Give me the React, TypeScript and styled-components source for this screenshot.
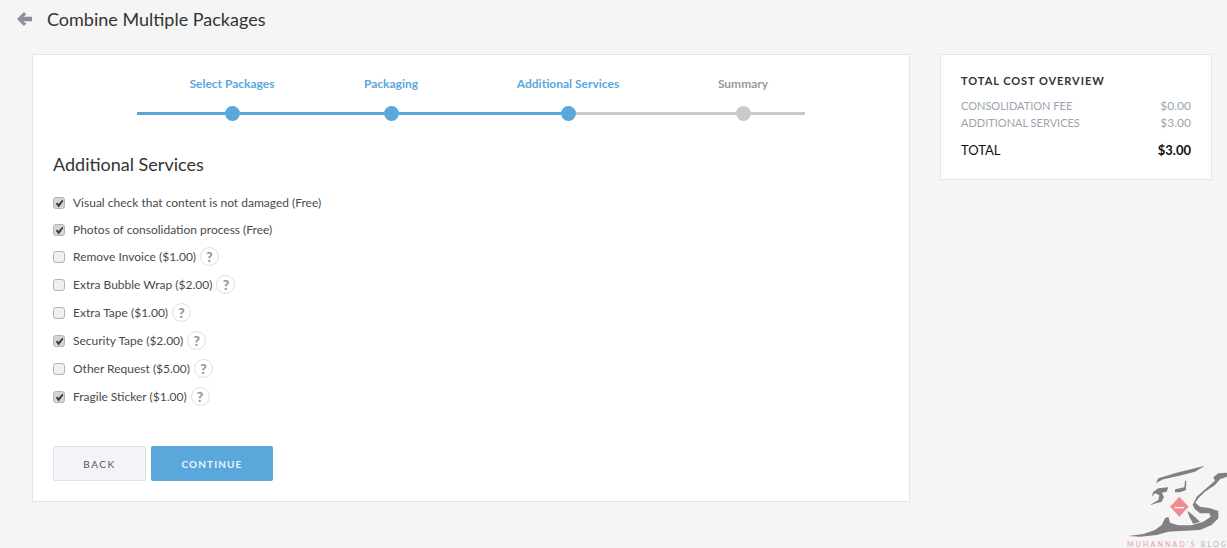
import * as React from 'react';
import styled, {createGlobalStyle} from 'styled-components';

const BLUE = '#5aa7dc';
const GREY = '#cacaca';

type Step = {label: string; width: number; left: boolean; right: boolean; active: boolean};

const steps: Step[] = [
  {label: 'Select Packages', width: 190, left: true, right: true, active: true},
  {label: 'Packaging', width: 128, left: true, right: true, active: true},
  {label: 'Additional Services', width: 226, left: true, right: false, active: true},
  {label: 'Summary', width: 124, left: false, right: false, active: false},
];

type Service = {label: string; checked: boolean; help: boolean};

const services: Service[] = [
  {label: 'Visual check that content is not damaged (Free)', checked: true, help: false},
  {label: 'Photos of consolidation process (Free)', checked: true, help: false},
  {label: 'Remove Invoice ($1.00)', checked: false, help: true},
  {label: 'Extra Bubble Wrap ($2.00)', checked: false, help: true},
  {label: 'Extra Tape ($1.00)', checked: false, help: true},
  {label: 'Security Tape ($2.00)', checked: true, help: true},
  {label: 'Other Request ($5.00)', checked: false, help: true},
  {label: 'Fragile Sticker ($1.00)', checked: true, help: true},
];

const App = () => {
  return (
    <Page>
      <GlobalStyle />
      <Header>
        <BackArrow viewBox="0 0 15 14" aria-hidden="true">
          <path d="M7 0 L9.4 2.4 L6.2 4.7 H15 V9.3 H6.2 L9.4 11.6 L7 14 L0 7 Z" />
        </BackArrow>
        <Title>Combine Multiple Packages</Title>
      </Header>
      <Columns>
        <MainCard>
          <Stepper>
            {steps.map((step) => (
              <StepColumn key={step.label} $width={step.width}>
                <StepLabel $active={step.active}>{step.label}</StepLabel>
                <Track>
                  <TrackLine $active={step.left} />
                  <Dot $active={step.active} />
                  <TrackLine $active={step.right} />
                </Track>
              </StepColumn>
            ))}
          </Stepper>
          <Heading>Additional Services</Heading>
          <ServiceList>
            {services.map((service) => (
              <ServiceRow key={service.label} $help={service.help}>
                <CheckBox $checked={service.checked}>
                  {service.checked && (
                    <svg width="9" height="9" viewBox="0 0 9 9" aria-hidden="true">
                      <path d="M0.8 4.8 L2.4 3.4 L3.6 5 L7.2 0.8 L8.4 2 L3.7 8.4 Z" fill="#3c3c3c" />
                    </svg>
                  )}
                </CheckBox>
                <ServiceLabel>{service.label}</ServiceLabel>
                {service.help && <HelpBadge>?</HelpBadge>}
              </ServiceRow>
            ))}
          </ServiceList>
          <Actions>
            <BackButton type="button">BACK</BackButton>
            <ContinueButton type="button">CONTINUE</ContinueButton>
          </Actions>
        </MainCard>
        <SideCard>
          <SideTitle>TOTAL COST OVERVIEW</SideTitle>
          <CostRow>
            <CostName>CONSOLIDATION FEE</CostName>
            <span>$0.00</span>
          </CostRow>
          <CostRow>
            <CostName>ADDITIONAL SERVICES</CostName>
            <span>$3.00</span>
          </CostRow>
          <TotalRow>
            <span>TOTAL</span>
            <strong>$3.00</strong>
          </TotalRow>
        </SideCard>
      </Columns>
      <Watermark>
        <svg width="127" height="88" viewBox="0 0 381 264" aria-hidden="true">
          <g fill="#808080">
            <path d="M168 99 L175 85 L230 68 L315 47 L285 65 L235 78 L190 88 Z" />
            <path d="M340 82 L355 70 L381 68 L381 80 L360 88 L345 105 L315 125 L295 145 L286 158 L300 170 L330 175 L355 183 L355 205 L335 225 L300 240 L240 243 L205 245 L170 255 L120 260 L85 258 L130 252 L165 240 L185 225 L195 205 L205 200 L210 218 L235 226 L275 226 L310 215 L332 200 L328 190 L300 190 L285 178 L278 165 L290 140 L330 105 L345 92 Z" />
            <path d="M160 125 L175 115 L205 112 L200 125 L185 128 L192 140 L185 155 L150 165 L175 150 L178 135 L165 130 L155 140 Z" />
            <path d="M225 118 L240 115 L253 112 L255 92 L259 92 L258 120 L240 127 L225 127 Z" />
            <path d="M262 182 L278 195 L300 215 L280 222 L268 200 Z" />
          </g>
          <path d="M238 140 L266 170 L238 200 L210 170 Z" fill="#f08b92" />
          <path d="M224 171 H252 V175 H224 Z" fill="#f7f7f7" />
        </svg>
        <WatermarkText>
          <span>MUHANNAD'S</span> BLOG
        </WatermarkText>
      </Watermark>
    </Page>
  );
};

export default App;

const GlobalStyle = createGlobalStyle`
  html, body {
    margin: 0;
    padding: 0;
    height: 100%;
    background: #f5f5f5;
  }

  body {
    font-family: Lato, "Open Sans", sans-serif;
    color: #3c3c3c;
  }
`;

const Page = styled.div`
  position: relative;
  width: 1227px;
  height: 548px;
  overflow: hidden;
  background: #f5f5f5;
`;

const Header = styled.header`
  display: flex;
  align-items: center;
  height: 38px;
  padding-left: 17px;
`;

const BackArrow = styled.svg`
  width: 15px;
  height: 14px;
  margin-right: 15px;
  fill: #8d8d9b;
`;

const Title = styled.h1`
  margin: 0;
  font-size: 18px;
  font-weight: 400;
  color: #333;
`;

const Columns = styled.div`
  display: flex;
  align-items: flex-start;
  gap: 30px;
  margin-top: 16px;
  padding-left: 32px;
`;

const MainCard = styled.section`
  box-sizing: border-box;
  width: 878px;
  height: 448px;
  padding: 19px 20px 0;
  background: #fff;
  border: 1px solid #e3e3e8;
`;

const Stepper = styled.div`
  display: flex;
  margin-left: 84px;
  width: 668px;
`;

const StepColumn = styled.div<{$width: number}>`
  display: flex;
  flex-direction: column;
  align-items: center;
  width: ${(p) => p.$width}px;
`;

const StepLabel = styled.div<{$active: boolean}>`
  height: 20px;
  line-height: 20px;
  font-size: 12px;
  font-weight: 700;
  white-space: nowrap;
  color: ${(p) => (p.$active ? BLUE : '#9a9a9a')};
`;

const Track = styled.div`
  display: flex;
  align-items: center;
  width: 100%;
  height: 16px;
  margin-top: 11px;
`;

const TrackLine = styled.div<{$active: boolean}>`
  flex: 1;
  height: 3px;
  background: ${(p) => (p.$active ? BLUE : GREY)};
`;

const Dot = styled.div<{$active: boolean}>`
  flex: none;
  width: 15px;
  height: 15px;
  border-radius: 50%;
  background: ${(p) => (p.$active ? BLUE : GREY)};
`;

const Heading = styled.h2`
  margin: 32px 0 0;
  height: 22px;
  line-height: 22px;
  font-size: 18px;
  font-weight: 400;
  color: #333;
`;

const ServiceList = styled.div`
  display: flex;
  flex-direction: column;
  margin-top: 18px;
`;

const ServiceRow = styled.label<{$help: boolean}>`
  display: flex;
  align-items: center;
  height: 19px;
  margin-bottom: ${(p) => (p.$help ? 9 : 8)}px;
`;

const CheckBox = styled.span<{$checked: boolean}>`
  box-sizing: border-box;
  display: flex;
  align-items: center;
  justify-content: center;
  width: 12px;
  height: 12px;
  margin: 1px 8px 0 0;
  border: 1px solid #b4b4b4;
  border-radius: 3px;
  background: ${(p) => (p.$checked ? '#d6d6d6' : '#f0f0f0')};
`;

const ServiceLabel = styled.span`
  font-size: 12px;
  color: #4a4a4a;
`;

const HelpBadge = styled.span`
  box-sizing: border-box;
  display: flex;
  align-items: center;
  justify-content: center;
  width: 19px;
  height: 19px;
  margin-left: 4px;
  border: 1px solid #dcdfe3;
  border-radius: 50%;
  font-size: 14px;
  font-weight: 900;
  color: #8f98a3;
`;

const Actions = styled.div`
  display: flex;
  gap: 5px;
  margin-top: 31px;
`;

const BackButton = styled.button`
  box-sizing: border-box;
  width: 93px;
  height: 35px;
  padding: 0;
  border: 1px solid #dfe1e6;
  border-radius: 2px;
  background: #f3f4f8;
  font-family: inherit;
  font-size: 10px;
  letter-spacing: 1.6px;
  color: #555;
`;

const ContinueButton = styled.button`
  box-sizing: border-box;
  width: 122px;
  height: 35px;
  padding: 0;
  border: 0;
  border-radius: 2px;
  background: ${BLUE};
  font-family: inherit;
  font-size: 10px;
  font-weight: 700;
  letter-spacing: 1.1px;
  color: #e8f3fb;
`;

const SideCard = styled.aside`
  box-sizing: border-box;
  width: 272px;
  height: 126px;
  padding: 19px 20px 0;
  background: #fff;
  border: 1px solid #e3e3e8;
`;

const SideTitle = styled.div`
  height: 14px;
  line-height: 14px;
  margin-bottom: 9px;
  font-size: 11px;
  font-weight: 700;
  letter-spacing: 0.95px;
  color: #333;
`;

const CostRow = styled.div`
  display: flex;
  justify-content: space-between;
  height: 17px;
  line-height: 17px;
  font-size: 12px;
  color: #9aa5ae;
`;

const CostName = styled.span`
  font-size: 11px;
`;

const TotalRow = styled.div`
  display: flex;
  justify-content: space-between;
  margin-top: 11px;
  height: 17px;
  line-height: 17px;
  font-size: 13px;
  color: #111;

  strong {
    font-weight: 700;
  }
`;

const Watermark = styled.div`
  position: absolute;
  left: 1100px;
  top: 450px;
  width: 127px;
  height: 98px;
  overflow: hidden;
`;

const WatermarkText = styled.div`
  position: absolute;
  left: 27px;
  top: 90px;
  font-size: 7px;
  line-height: 9px;
  letter-spacing: 2.2px;
  white-space: nowrap;
  color: #b5b5b5;

  span {
    color: #ee9aa0;
  }
`;
